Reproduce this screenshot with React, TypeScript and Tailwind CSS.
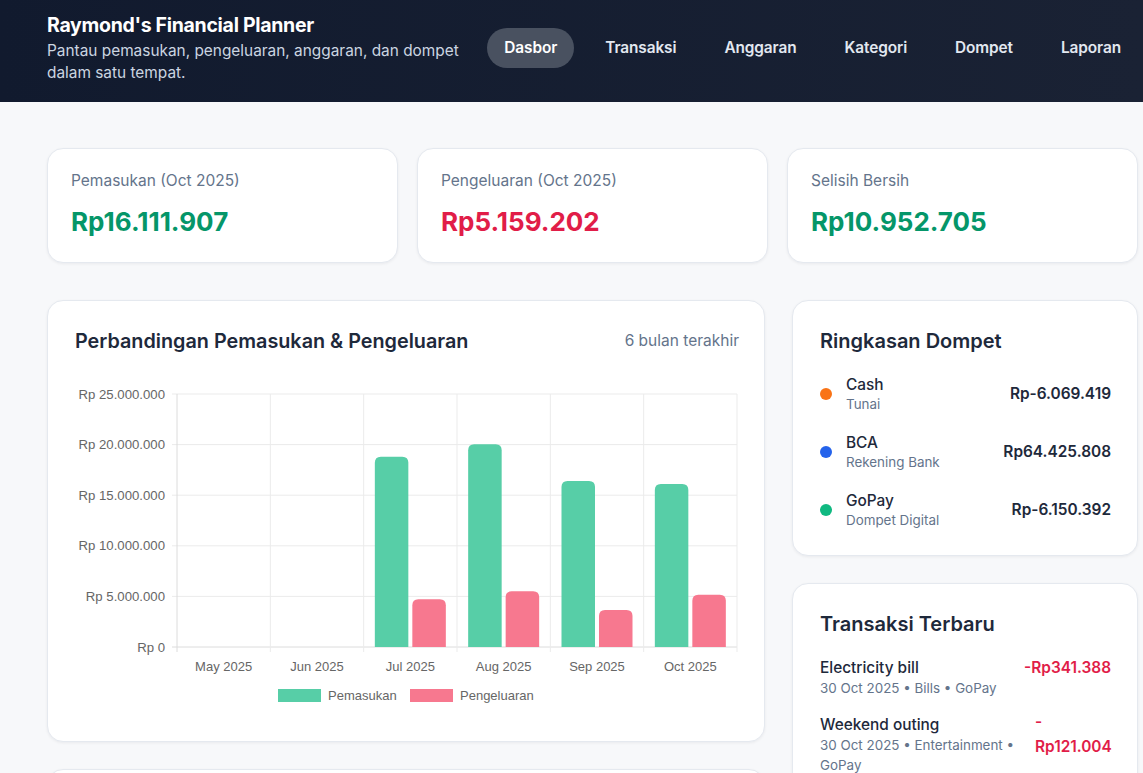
import React from "react";

const navItems = ["Dasbor", "Transaksi", "Anggaran", "Kategori", "Dompet", "Laporan"];

const stats = [
  { label: "Pemasukan (Oct 2025)", value: "Rp16.111.907", color: "text-[#059669]" },
  { label: "Pengeluaran (Oct 2025)", value: "Rp5.159.202", color: "text-[#e11d48]" },
  { label: "Selisih Bersih", value: "Rp10.952.705", color: "text-[#059669]" },
];

const wallets = [
  { name: "Cash", type: "Tunai", amount: "Rp-6.069.419", dot: "bg-[#f97316]" },
  { name: "BCA", type: "Rekening Bank", amount: "Rp64.425.808", dot: "bg-[#2563eb]" },
  { name: "GoPay", type: "Dompet Digital", amount: "Rp-6.150.392", dot: "bg-[#10b981]" },
];

// data bulanan dalam juta rupiah
const months = [
  { label: "May 2025", inc: 0, exp: 0 },
  { label: "Jun 2025", inc: 0, exp: 0 },
  { label: "Jul 2025", inc: 18.8, exp: 4.71 },
  { label: "Aug 2025", inc: 20.03, exp: 5.5 },
  { label: "Sep 2025", inc: 16.4, exp: 3.66 },
  { label: "Oct 2025", inc: 16.11, exp: 5.16 },
];

const X0 = 177;
const X1 = 737;
const Y0 = 394;
const Y1 = 647;
const colW = (X1 - X0) / 6;
const pxPerM = (Y1 - Y0) / 25;

const barPath = (x: number, w: number, top: number, r = 6) =>
  `M${x},${Y1} L${x},${top + r} Q${x},${top} ${x + r},${top} L${x + w - r},${top} Q${x + w},${top} ${x + w},${top + r} L${x + w},${Y1} Z`;

const Chart = () => {
  const ticks = [0, 5, 10, 15, 20, 25];
  const tickLabel = ["Rp 0", "Rp 5.000.000", "Rp 10.000.000", "Rp 15.000.000", "Rp 20.000.000", "Rp 25.000.000"];
  return (
    <svg width={664} height={342} viewBox="75 370 664 342" className="block" style={{ fontFamily: '"Liberation Sans", Arial, sans-serif' }}>
      {/* grid */}
      {ticks.map((t, i) => {
        const y = Y1 - t * pxPerM;
        return (
          <g key={t}>
            <line x1={172} x2={X1} y1={y} y2={y} stroke={i === 0 ? "#dcdcdc" : "#ebebeb"} strokeWidth={1} />
            <text x={165} y={y + 4.5} textAnchor="end" fontSize={13.2} fill="#666">
              {tickLabel[i]}
            </text>
          </g>
        );
      })}
      {Array.from({ length: 7 }).map((_, i) => {
        const x = X0 + i * colW;
        return <line key={i} x1={x} x2={x} y1={Y0} y2={652} stroke={i === 0 ? "#dcdcdc" : "#ebebeb"} strokeWidth={1} />;
      })}
      {months.map((m, i) => {
        const c = X0 + (i + 0.5) * colW;
        return (
          <g key={m.label}>
            {m.inc > 0 && <path d={barPath(c - 35.5, 33.5, Y1 - m.inc * pxPerM)} fill="#57cea7" />}
            {m.exp > 0 && <path d={barPath(c + 2, 33.5, Y1 - m.exp * pxPerM)} fill="#f7788f" />}
            <text x={c} y={671} textAnchor="middle" fontSize={13} fill="#666">
              {m.label}
            </text>
          </g>
        );
      })}
      {/* legend */}
      <rect x={278} y={689} width={43} height={13} fill="#57cea7" />
      <text x={328} y={700} fontSize={13} fill="#666">Pemasukan</text>
      <rect x={410} y={689} width={43} height={13} fill="#f7788f" />
      <text x={460} y={700} fontSize={13} fill="#666">Pengeluaran</text>
    </svg>
  );
};

export default function App() {
  return (
    <div className="min-h-screen bg-[#f7f8fa] font-['Inter',sans-serif] text-[#1e293b]">
      {/* Header */}
      <header className="h-[102px] bg-gradient-to-r from-[#111a2e] to-[#1a2234]">
        <div className="ml-[47px] w-[1091px] h-full flex items-center justify-between pb-[6px]">
          <div>
            <h1 className="text-[19.5px] leading-[24px] font-bold tracking-[-0.3px] text-white">Raymond's Financial Planner</h1>
            <p className="mt-[3px] w-[425px] text-[15.4px] leading-[22px] text-[#cbd5e1]">
              Pantau pemasukan, pengeluaran, anggaran, dan dompet dalam satu tempat.
            </p>
          </div>
          <nav className="flex items-center gap-[14px]">
            {navItems.map((item, i) => (
              <a
                key={item}
                href="#"
                className={`h-10 flex items-center px-[17px] rounded-full text-[15.4px] font-semibold tracking-[-0.1px] ${
                  i === 0 ? "bg-[#495160] text-white" : "text-[#e2e8f0]"
                }`}
              >
                {item}
              </a>
            ))}
          </nav>
        </div>
      </header>

      <main className="ml-[47px] w-[1091px] pt-[46px] pb-10">
        {/* Kartu ringkasan */}
        <div className="grid grid-cols-3 gap-[19px]">
          {stats.map((s) => (
            <div key={s.label} className="h-[115px] rounded-2xl border border-[#e5e9ef] bg-white px-[23px] pt-[22px] shadow-[0_1px_3px_rgba(15,23,42,0.06)]">
              <div className="text-[15.5px] leading-[20px] text-[#64748b]">{s.label}</div>
              <div className={`mt-[14px] text-[26px] leading-[34px] font-bold ${s.color}`}>{s.value}</div>
            </div>
          ))}
        </div>

        <div className="mt-[37px] flex items-start gap-[27px]">
          {/* Kolom kiri */}
          <div className="w-[718px] flex flex-col gap-[27px]">
            <div className="h-[442px] rounded-2xl border border-[#e5e9ef] bg-white pl-[27px] pr-[25px] pt-[27px] shadow-[0_1px_3px_rgba(15,23,42,0.06)]">
              <div className="flex items-center justify-between">
                <h2 className="text-[19.8px] leading-[26px] font-semibold text-[#1e293b]">Perbandingan Pemasukan &amp; Pengeluaran</h2>
                <span className="text-[15.5px] text-[#64748b]">6 bulan terakhir</span>
              </div>
              <div className="mt-4">
                <Chart />
              </div>
            </div>
            <div className="h-[200px] rounded-2xl border border-[#e5e9ef] bg-white shadow-[0_1px_3px_rgba(15,23,42,0.06)]" />
          </div>

          {/* Kolom kanan */}
          <div className="w-[346px] flex flex-col gap-[27px]">
            <div className="rounded-2xl border border-[#e5e9ef] bg-white pl-[27px] pr-[26px] pt-[27px] pb-[26px] shadow-[0_1px_3px_rgba(15,23,42,0.06)]">
              <h2 className="text-[20px] leading-[26px] font-semibold text-[#1e293b]">Ringkasan Dompet</h2>
              <div className="mt-[21px] flex flex-col gap-[20px]">
                {wallets.map((w) => (
                  <div key={w.name} className="flex items-center justify-between">
                    <div className="flex items-center gap-[14px]">
                      <span className={`h-3 w-3 shrink-0 rounded-full ${w.dot}`} />
                      <div>
                        <div className="text-[15.4px] leading-[20px] font-medium text-[#1e293b]">{w.name}</div>
                        <div className="text-[13.4px] leading-[18px] text-[#64748b]">{w.type}</div>
                      </div>
                    </div>
                    <div className="text-[15.4px] font-semibold text-[#1e293b]">{w.amount}</div>
                  </div>
                ))}
              </div>
            </div>

            <div className="h-[260px] rounded-2xl border border-[#e5e9ef] bg-white pl-[27px] pr-[26px] pt-[27px] shadow-[0_1px_3px_rgba(15,23,42,0.06)]">
              <h2 className="text-[20px] leading-[26px] font-semibold text-[#1e293b]">Transaksi Terbaru</h2>
              <div className="mt-[21px] flex flex-col gap-[17px]">
                <div className="flex items-start justify-between">
                  <div>
                    <div className="text-[15.4px] leading-[20px] font-medium text-[#1e293b]">Electricity bill</div>
                    <div className="text-[13.4px] leading-[20px] text-[#64748b]">30 Oct 2025 • Bills • GoPay</div>
                  </div>
                  <div className="text-[15.4px] leading-[20px] font-semibold text-[#e11d48]">-Rp341.388</div>
                </div>
                <div className="flex items-start justify-between">
                  <div className="w-[200px]">
                    <div className="text-[15.4px] leading-[20px] font-medium text-[#1e293b]">Weekend outing</div>
                    <div className="text-[13.4px] leading-[20px] text-[#64748b]">30 Oct 2025 • Entertainment • GoPay</div>
                  </div>
                  <div className="w-[76px] mt-[-6px] text-[15.4px] leading-[25px] font-semibold text-[#e11d48]">
                    -<br />Rp121.004
                  </div>
                </div>
              </div>
            </div>
          </div>
        </div>
      </main>
    </div>
  );
}
